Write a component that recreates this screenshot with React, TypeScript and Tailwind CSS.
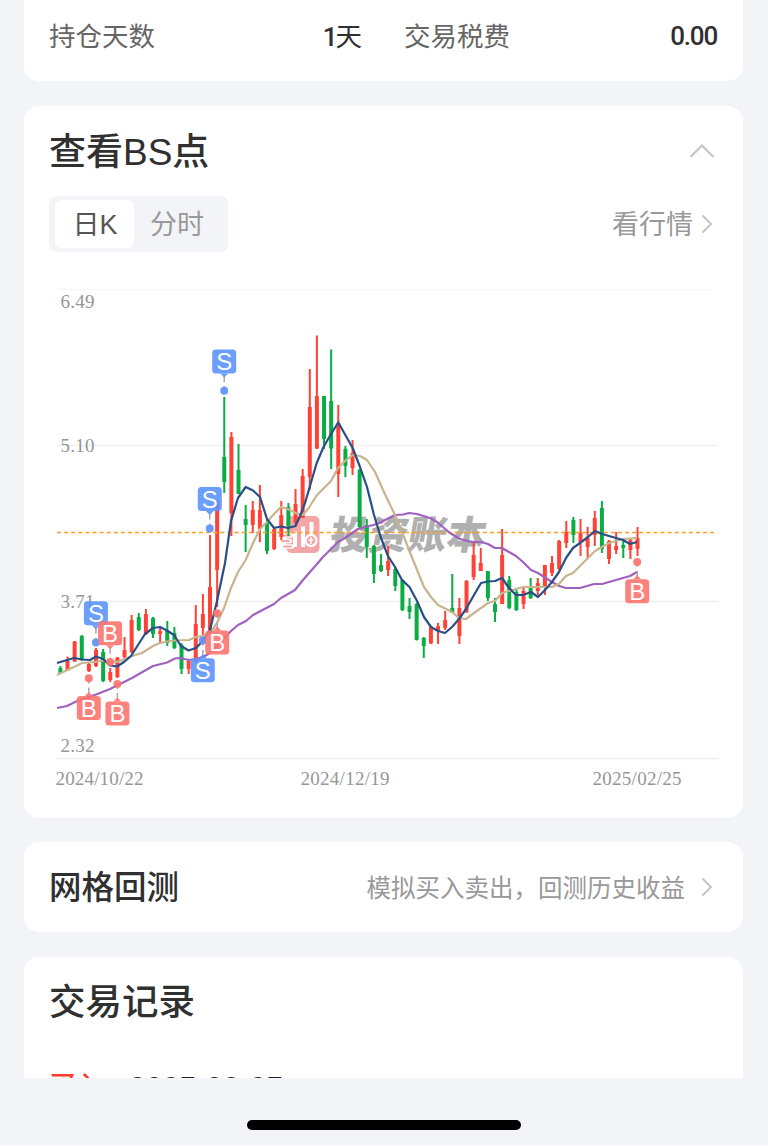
import React from "react";

type Candle = [up: 0 | 1, high: number, low: number, top: number, bottom: number];

// One entry per trading day; 1 is a rising (red) day. Values are chart ordinates.
const candles: Candle[] = [
  [0, 666, 674, 668, 673], [1, 656.5, 671, 661, 670], [1, 641, 662, 641.5, 661.5], [0, 635, 661, 636, 660],
  [1, 662, 672, 664, 671], [1, 648, 667, 650, 666], [0, 649, 682, 652, 681], [1, 668, 682, 672, 680],
  [1, 657, 678, 657.5, 677], [1, 637, 659, 650, 657], [1, 615, 653, 620, 652], [0, 613, 631, 617, 630],
  [1, 609, 635, 614, 634], [0, 617, 638, 618, 634], [1, 628, 644, 631, 634], [0, 621, 646, 631, 643],
  [0, 627, 649, 633, 648], [0, 643, 674, 645, 669], [1, 659, 674, 661, 669], [1, 605, 663, 624, 661],
  [1, 594, 635, 614, 628], [1, 535, 632, 587, 630], [1, 500, 607, 500, 570], [0, 397, 493, 457, 482],
  [1, 432, 536, 437, 513], [0, 444, 494, 470, 494], [0, 505, 552, 519, 525], [1, 501, 533, 510, 525],
  [1, 485, 542, 510, 529], [0, 519, 554, 523, 551], [1, 528, 550, 529, 549], [1, 501, 540, 515, 537],
  [0, 503, 536, 507, 526], [1, 489, 524, 504, 523], [1, 469, 518, 476, 518], [1, 369, 490, 407, 477],
  [1, 335.5, 449, 396, 448.5], [0, 396, 449, 396, 439], [0, 349.5, 469, 401, 448.5], [1, 405, 497, 423, 474],
  [0, 446, 477, 449, 466], [1, 440, 475, 453, 468], [0, 469, 528, 470, 527], [0, 519, 558, 525, 547],
  [0, 545, 583, 546, 574], [0, 554, 572, 565, 571], [1, 546, 576, 561, 570], [0, 567, 591, 569, 586],
  [0, 579, 611, 580, 610], [0, 598, 619, 606, 612], [0, 603, 640.5, 604, 640], [0, 637, 658, 638, 646],
  [1, 626, 644, 627, 643.5], [1, 623, 644, 626, 631], [1, 611, 630, 620, 628], [0, 574, 613, 608, 613],
  [1, 598, 644, 608, 636], [1, 580, 613, 581, 612], [1, 542, 580, 555, 577], [1, 548, 571, 563, 571],
  [0, 571, 601, 571, 598], [0, 598, 622, 604, 612], [1, 529, 604, 555, 604], [0, 576, 609, 580, 608],
  [0, 590, 611, 592, 610], [1, 588, 609, 591, 604], [0, 578, 599, 587, 598], [1, 578, 595, 583, 591],
  [1, 565, 595, 565, 587], [1, 556, 576, 563, 573], [1, 540, 570, 541, 569], [1, 521, 548, 532, 543],
  [0, 517, 543, 520, 535], [1, 519, 556, 533, 542], [1, 527, 558, 538, 547], [1, 511, 546, 518, 535],
  [0, 501, 553, 508, 549], [1, 540, 564, 541, 559], [1, 532, 554, 546, 550], [0, 540, 558, 545, 548],
  [1, 538, 559, 540, 550], [1, 527, 556, 538, 549],
];

const shortAverage =
  "57,663 74,658 82,659.5 90,660 96,656.5 103,659 110,665.5 117,666.5 124,662 131,656 138,645 145,634 153,628 160,627 167,630.5 174,635 181,646 188.6,650.5 196,648 203,641 210,630 217,601 225,563 231,521 238,498 245.7,487 253,490.5 260,497 267,519 274,528 281,526.5 288,528 295.5,526 300,516 305,503 316.7,463 323.5,447 331,434 338.3,422.5 352.7,448 360,467 367,487 374,515 381,538 388,556 395,567 402,580 409.5,587 417,601 424,617 431,627 438,631 445,633 452,627 459,619 466,609 474,595 481,583 488,581.5 495,581 502,578 509,588 516,595 523,595 531,592 538,597 545,590 552,582 559,572 566,558 573,548 580,543 588,537 595,531 602,534 609,536 616,538 623,540 630,544 637,542";
const midAverage =
  "57,675 63,672 74,667 82,663 95,662 103,660.5 110,661 117,662 125,659 132,656 142,653 153,646 160,643 167,641.5 174,640.5 189,640 196,637 203,636 210,633 217,623 224,608 231,588 238,572 245.7,560 253,543 260,529 267,522 274,514 281,507 288,509 295.5,513 302.7,515 308,509 317,495 331,481 338,468 345,461 352.7,455 360,456 367,460 375,472 383,490 395,515 402,532 409,550 424,587 431,597 438,605 452,612 459,618 466,619 474,613 481,608 488,603 495,601 502,593 523,587 552,587 559,584 566,576 573,573 595,551 609,543 623,539 637,538";
const longAverage =
  "57,708 67,706 75,702 96,694.5 110,689 118,685 132,678 153,666 167,662.5 175,658.5 180,658 189,660 196,659 203,657 210,653 217,646 231,631 238,625 246,621 253,615 274,604 281,598 295,590 303,580 317,564 323,557 338,542 345,538 358,529 377,524 395,515 403,514.5 409,513 417,514 430,518 437,522 450,533 460,539 472,542 481,542 488,544 495,548 502,548 509,552 516,556 523,562 531,570 538,573 552,582 559,586 566,588 580,588 594,584 602,584 630,576 637,572";

const markers = [
  { kind: "S", x: 224.2, y: 361.5, dot: 390.7 },
  { kind: "S", x: 209.8, y: 499, dot: 528.5 },
  { kind: "S", x: 95.9, y: 613.2, dot: 642.5 },
  { kind: "B", x: 110.1, y: 633.2, dot: 662 },
  { kind: "B", x: 88.8, y: 708, dot: 678.3 },
  { kind: "B", x: 117.4, y: 713.5, dot: 684 },
  { kind: "S", x: 202.8, y: 670.3, dot: 640.5 },
  { kind: "B", x: 217.2, y: 642.6, dot: 613.3 },
  { kind: "B", x: 637.2, y: 591.3, dot: 562 },
];

function Marker({ kind, x, y, dot }: (typeof markers)[number]) {
  const color = kind === "S" ? "#5c93fd" : "#fd746f";
  const dir = dot > y ? 1 : -1;
  const edge = y + dir * 11.5;
  return (
    <g>
      <line x1={x} x2={x} y1={edge + dir * 3} y2={dot} stroke="#a3a3a3" strokeWidth="1.4" strokeDasharray="6 4" />
      <circle cx={x} cy={dot} r="4" fill={color} fillOpacity="0.92" />
      <rect x={x - 12} y={y - 12} width="24" height="24" rx="3.5" fill={color} fillOpacity="0.9" />
      <path d={`M${x - 4} ${edge + dir * 0.5}L${x} ${edge + dir * 4.5}L${x + 4} ${edge + dir * 0.5}Z`} fill={color} fillOpacity="0.9" />
      <text x={x} y={y + 8.7} textAnchor="middle" fill="#fff" className="font-['Liberation_Sans',sans-serif] text-[24px]">
        {kind}
      </text>
    </g>
  );
}

function Watermark() {
  return (
    <g>
      <rect x="286.5" y="516" width="33" height="37" rx="5" fill="#f3a5a7" />
      <path d="M285 535.500h6M282 541h8M285 546.500h7" stroke="#fff" strokeWidth="4.500" strokeLinecap="round" />
      <path d="M284 535.500h6M282 541h7M284 546.500h7" stroke="#f3a5a7" strokeWidth="2" strokeLinecap="round" />
      <g stroke="#fff" strokeWidth="4" fill="none">
        <path d="M295 531.500V547M303 526.500V547M311.500 522V535" />
        <circle cx="311" cy="540.500" r="5.500" strokeWidth="2.200" fill="#f3a5a7" />
        <path d="M311 537v7M308.500 540h5" strokeWidth="1.500" />
      </g>
      <text transform="translate(328 549) skewX(-10)" fill="#b0b0b0" className="font-['Noto_Sans_CJK_SC',sans-serif] text-[39px] font-black">
        投资账本
      </text>
    </g>
  );
}

function KLineChart() {
  const label = "font-['Liberation_Serif',serif] text-[19px]";
  return (
    <svg viewBox="49 276 669 520" className="block h-[520px] w-[669px]">
      <g stroke="#f0f0f1" strokeWidth="1.6">
        <path d="M57 289.500H714" stroke="#f7f7f7" />
        <path d="M57 445.500H718M57 601.500H718M57 758.500H718" />
      </g>
      <g fill="#969696" className={label}>
        <text x="60.500" y="307.500" textLength="34">6.49</text>
        <text x="60.500" y="452" textLength="34">5.10</text>
        <text x="60.500" y="608" textLength="34">3.71</text>
        <text x="60.500" y="752" textLength="34">2.32</text>
        <text x="55.500" y="785" textLength="88">2024/10/22</text>
        <text x="300.500" y="785" textLength="89">2024/12/19</text>
        <text x="592.500" y="785" textLength="89">2025/02/25</text>
      </g>
      <Watermark />
      {candles.map(([up, high, low, top, bottom], i) => {
        const x = 60.4 + i * 7.125;
        return (
          <g key={i} fill={up ? "#ff4136" : "#0aad44"}>
            <rect x={x - 1} y={high} width="2" height={low - high} />
            <rect x={x - 2} y={top} width="4" height={bottom - top} rx="0.5" />
          </g>
        );
      })}
      <path d="M57 532.500H714" stroke="#fc9d1c" strokeWidth="1.4" strokeDasharray="4 3.100" />
      <g fill="none" strokeWidth="2.2" strokeLinejoin="round">
        <polyline points={longAverage} stroke="#a061bf" />
        <polyline points={midAverage} stroke="#c8b48d" />
        <polyline points={shortAverage} stroke="#284f86" />
      </g>
      {markers.map((m, i) => (
        <Marker key={i} {...m} />
      ))}
    </svg>
  );
}

function ChevronRight() {
  return (
    <svg viewBox="0 0 12 20" className="h-5 w-3" fill="none" stroke="#c4c4c4" strokeWidth="2">
      <path d="M1.500 1.500L10 10L1.500 18.500" />
    </svg>
  );
}

export default function App() {
  return (
    <div className="flex h-[1146px] w-[768px] flex-col overflow-hidden border-b border-white bg-[#f3f4f7] font-['Liberation_Sans','Noto_Sans_CJK_SC',sans-serif] text-[#303030]">
      <main className="flex h-[1078px] shrink-0 flex-col overflow-hidden pl-6 pr-[25px]">
        <section className="flex h-[81px] shrink-0 rounded-b-[15px] bg-white px-[25px] text-[26.500px] leading-[40px]">
          <div className="flex h-10 w-[313px] justify-between pt-[17px]">
            <span className="text-[#666]">持仓天数</span>
            <span className="flex">
              <span className="font-[Roboto] text-[26px] font-medium tracking-[-2px]">1</span>天
            </span>
          </div>
          <div className="ml-[42px] flex h-10 flex-1 justify-between pt-[17px]">
            <span className="text-[#666]">交易税费</span>
            <span className="-mt-px pr-px font-[Roboto] text-[26px] font-medium tracking-[-1.200px]">0.00</span>
          </div>
        </section>

        <section className="mt-[25px] h-[712px] shrink-0 rounded-[15px] bg-white px-[25px]">
          <header className="flex h-[90px] items-center justify-between pr-[3px] pt-[2px]">
            <h2 className="text-[37px] font-medium leading-none">查看BS点</h2>
            <svg viewBox="0 0 26 14" className="-mt-[3px] h-3.5 w-[26px]" fill="none" stroke="#c8c8c8" strokeWidth="2.400">
              <path d="M1.500 13L13 1.500L24.500 13" />
            </svg>
          </header>
          <div className="flex items-center justify-between pr-[5px] text-[27px]">
            <div className="flex h-14 w-[179px] rounded-[7px] bg-[#f3f4f7] p-1">
              <span className="ml-[2px] flex w-[79px] items-center justify-center rounded-[6px] bg-white pl-px pt-0.5 text-[#555]">日K</span>
              <span className="ml-[16px] flex items-center pt-[3px] text-[#999]">分时</span>
            </div>
            <div className="flex items-center gap-2 text-[#999]">
              <span className="pt-[3px]">看行情</span>
              <ChevronRight />
            </div>
          </div>
          <div className="pt-6">
            <KLineChart />
          </div>
        </section>

        <section className="mt-6 flex h-[90px] shrink-0 items-center justify-between rounded-[15px] bg-white pl-[25px] pr-[30px]">
          <h2 className="pt-0.5 text-[32.500px] font-medium leading-none">网格回测</h2>
          <div className="flex items-center gap-4 text-[24.500px] text-[#999]">
            <span className="pt-[4px]">模拟买入卖出，回测历史收益</span>
            <ChevronRight />
          </div>
        </section>

        <section className="mt-[25px] h-[200px] shrink-0 rounded-[15px] bg-white px-[25px]">
          <h2 className="flex h-[90px] items-center pt-[3px] text-[36.500px] font-medium leading-none">交易记录</h2>
          <div className="flex items-start gap-[27px] pt-5 leading-[40px]">
            <span className="-mt-px text-[26.500px] font-medium text-[#ff3b30]">买入</span>
            <span className="pt-px text-[30.500px] font-bold tracking-[-0.200px] text-[#222]">2025-02-25</span>
          </div>
        </section>
      </main>
      <div className="flex h-[68px] items-end justify-center pb-[15px]">
        <div className="h-2.5 w-[274px] rounded-full bg-black" />
      </div>
    </div>
  );
}
